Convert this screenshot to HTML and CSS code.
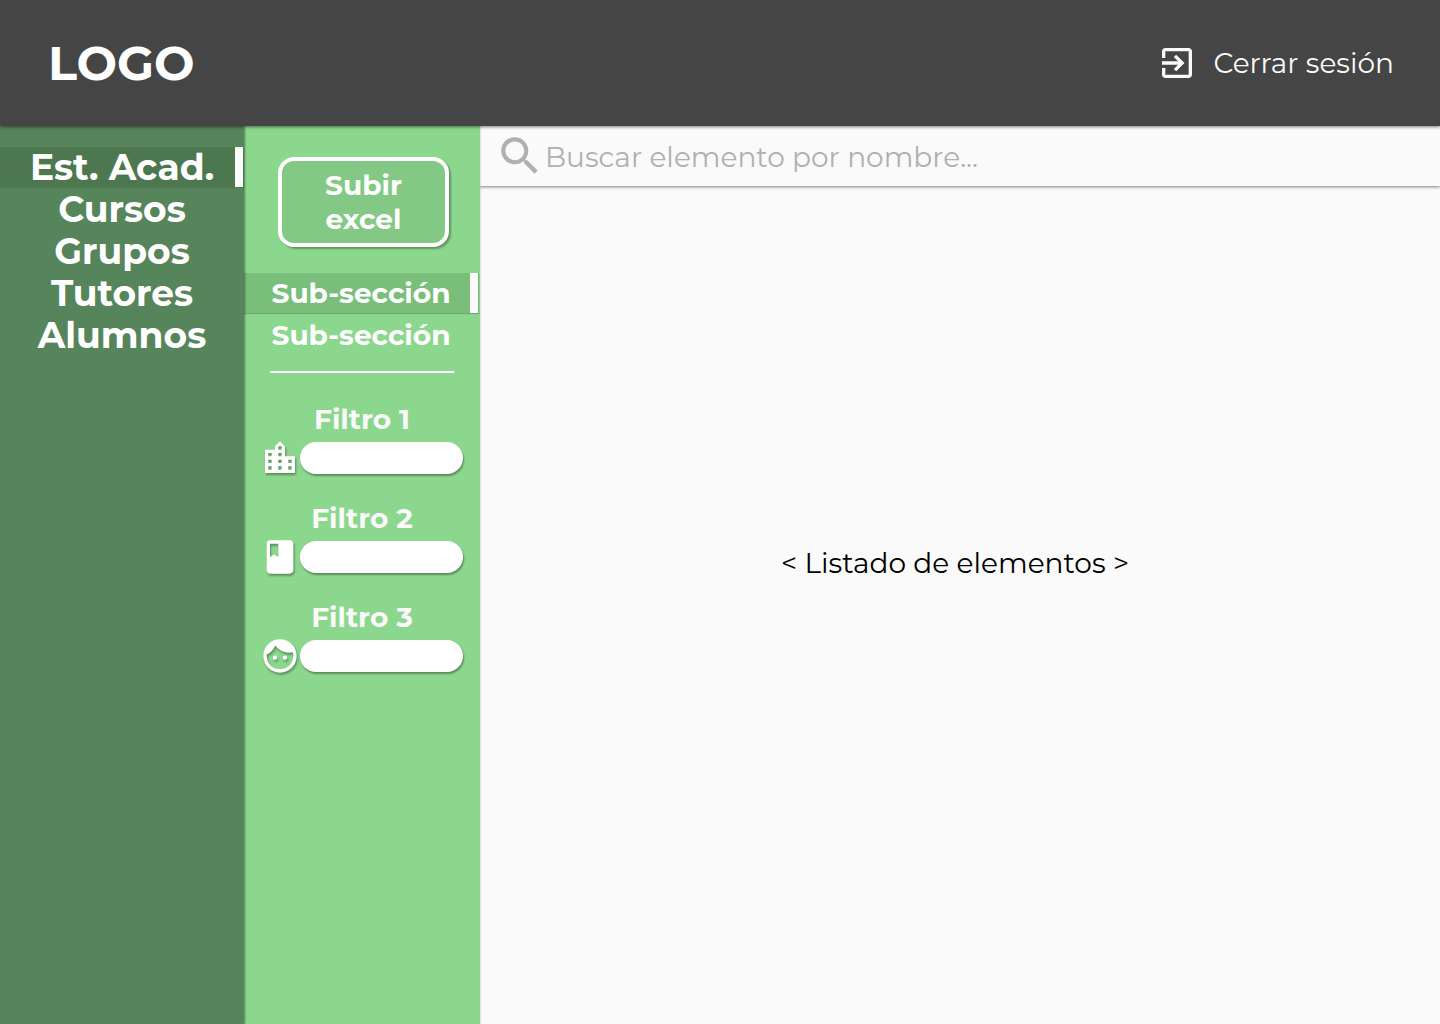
FILE: index.html
```html
<!DOCTYPE html>
<html lang="es">
<head>
  <meta charset="utf-8">
  <meta name="viewport" content="width=device-width, initial-scale=1">
  <title>Estructura académica</title>
  <link rel="stylesheet" href="styles.css">
</head>
<body>
  <header class="topbar">
    <a class="logo" href="#">LOGO</a>
    <button class="logout" type="button">
      <svg class="icon" viewBox="0 0 24 24" aria-hidden="true"><path d="M10.09 15.59L11.5 17l5-5-5-5-1.41 1.41L12.67 11H3v2h9.67l-2.58 2.59zM19 3H5c-1.11 0-2 .9-2 2v4h2V5h14v14H5v-4H3v4c0 1.1.89 2 2 2h14c1.1 0 2-.9 2-2V5c0-1.1-.9-2-2-2z"/></svg>
      <span>Cerrar sesión</span>
    </button>
  </header>

  <div class="layout">
    <nav class="sections" aria-label="Secciones">
      <a class="section active" href="#">Est. Acad.</a>
      <a class="section" href="#">Cursos</a>
      <a class="section" href="#">Grupos</a>
      <a class="section" href="#">Tutores</a>
      <a class="section" href="#">Alumnos</a>
    </nav>

    <aside class="panel">
      <button class="upload" type="button">Subir<br>excel</button>
      <nav class="subsections" aria-label="Sub-secciones">
        <a class="subsection active" href="#">Sub-sección</a>
        <a class="subsection" href="#">Sub-sección</a>
      </nav>
      <hr class="divider">
      <form class="filters">
        <div class="filter">
          <label for="filter-1">Filtro 1</label>
          <div class="field">
            <svg class="icon raised" viewBox="0 0 24 24" aria-hidden="true"><path d="M15 11V5l-3-3-3 3v2H3v14h18V11h-6zm-8 8H5v-2h2v2zm0-4H5v-2h2v2zm0-4H5V9h2v2zm6 8h-2v-2h2v2zm0-4h-2v-2h2v2zm0-4h-2V9h2v2zm0-4h-2V5h2v2zm6 12h-2v-2h2v2zm0-4h-2v-2h2v2z"/></svg>
            <input id="filter-1" type="text">
          </div>
        </div>
        <div class="filter">
          <label for="filter-2">Filtro 2</label>
          <div class="field">
            <svg class="icon raised" viewBox="0 0 24 24" aria-hidden="true"><path d="M18 2H6c-1.1 0-2 .9-2 2v16c0 1.1.9 2 2 2h12c1.1 0 2-.9 2-2V4c0-1.1-.9-2-2-2zM6 4h5v8l-2.5-1.5L6 12V4z"/></svg>
            <input id="filter-2" type="text">
          </div>
        </div>
        <div class="filter">
          <label for="filter-3">Filtro 3</label>
          <div class="field">
            <svg class="icon raised" viewBox="0 0 24 24" aria-hidden="true"><path d="M9 11.75c-.69 0-1.25.56-1.25 1.25s.56 1.25 1.25 1.25 1.25-.56 1.25-1.25-.56-1.25-1.25-1.25zm6 0c-.69 0-1.25.56-1.25 1.25s.56 1.25 1.25 1.25 1.25-.56 1.25-1.25-.56-1.25-1.25-1.25zM12 2C6.48 2 2 6.48 2 12s4.48 10 10 10 10-4.48 10-10S17.52 2 12 2zm0 18c-4.41 0-8-3.59-8-8 0-.29.02-.58.05-.86 2.36-1.05 4.23-2.98 5.21-5.37C11.07 8.33 14.05 10 17.42 10c.78 0 1.53-.09 2.25-.26.21.71.33 1.47.33 2.26 0 4.41-3.59 8-8 8z"/></svg>
            <input id="filter-3" type="text">
          </div>
        </div>
      </form>
    </aside>

    <main class="content">
      <label class="search">
        <svg class="search-icon" viewBox="0 0 24 24" aria-hidden="true"><path d="M15.5 14h-.79l-.28-.27C15.41 12.59 16 11.11 16 9.5 16 5.91 13.09 3 9.5 3S3 5.91 3 9.5 5.91 16 9.5 16c1.61 0 3.09-.59 4.23-1.57l.27.28v.79l5 4.99L20.49 19l-4.99-5zm-6 0C7.01 14 5 11.99 5 9.5S7.01 5 9.5 5 14 7.01 14 9.5 11.99 14 9.5 14z"/></svg>
        <input type="search" aria-label="Buscar elemento por nombre" placeholder="Buscar elemento por nombre...">
      </label>
      <section class="list">&lt; Listado de elementos &gt;</section>
    </main>
  </div>
</body>
</html>
```
FILE: styles.css
```css
* {
  box-sizing: border-box;
}

body {
  display: flex;
  flex-direction: column;
  min-height: 100vh;
  margin: 0;
  background: #fafafa;
  font-family: Montserrat, Inter, sans-serif;
  font-size: 28px;
}

a {
  color: inherit;
  text-decoration: none;
}

button,
input {
  font: inherit;
}

.icon {
  flex: none;
  width: 40px;
  height: 40px;
  fill: currentColor;
}

.topbar {
  z-index: 3;
  display: flex;
  align-items: center;
  justify-content: space-between;
  height: 126px;
  padding: 0 46px 0 48px;
  background: #454545;
  box-shadow: 0 1px 3px rgba(0, 0, 0, 0.5);
  color: #fff;
}

.logo {
  font-size: 48px;
  font-weight: 700;
}

.logout {
  display: flex;
  align-items: center;
  gap: 16px;
  padding: 0;
  border: 0;
  background: none;
  color: #fafafa;
}

.layout {
  display: grid;
  flex: 1;
  grid-template-columns: 244px 236px 1fr;
}

.sections {
  z-index: 2;
  display: flex;
  flex-direction: column;
  gap: 2px;
  padding-top: 21px;
  background: #57855b;
  box-shadow: 1px 0 2px rgba(0, 0, 0, 0.4);
  color: #fff;
  font-size: 36px;
  font-weight: 700;
}

.section,
.subsection {
  position: relative;
  height: 40px;
  line-height: 40px;
  text-align: center;
}

.active::after {
  content: "";
  position: absolute;
  top: 0;
  right: 1px;
  width: 8px;
  height: 40px;
  background: #fafafa;
}

.section.active {
  background: #4d774f;
  box-shadow: 0 1px 1px rgba(0, 0, 0, 0.1);
}

.panel {
  z-index: 1;
  padding-top: 31px;
  background: #8cd78e;
  box-shadow: 0 0 2px rgba(0, 0, 0, 0.3);
  color: #fff;
  font-weight: 700;
}

.upload {
  display: block;
  width: 171px;
  height: 90px;
  margin: 0 0 26px 34px;
  padding: 0;
  border: 4px solid #fff;
  border-radius: 16px;
  background: #83c985;
  box-shadow: 2px 2px 2px rgba(0, 0, 0, 0.3);
  color: #fff;
  line-height: 34px;
}

.subsections {
  display: flex;
  flex-direction: column;
  gap: 2px;
  padding-right: 1px;
}

.subsection {
  padding-right: 1px;
}

.subsection.active {
  background: #79be7b;
  box-shadow: 0 1px 1px rgba(0, 0, 0, 0.2);
}

.divider {
  height: 2px;
  margin: 16px 26px 29px;
  border: 0;
  background: #fff;
}

.filters {
  display: flex;
  flex-direction: column;
  gap: 23px;
}

.filter {
  display: flex;
  flex-direction: column;
  gap: 2px;
}

.filter label {
  height: 34px;
  color: #fafafa;
  line-height: 34px;
  text-align: center;
}

.field {
  display: flex;
  align-items: center;
  padding: 0 17px 0 16px;
}

.field input {
  width: 100%;
  min-width: 0;
  height: 32px;
  padding: 0 14px;
  border: 0;
  border-radius: 16px;
  background: #fff;
  box-shadow: 1px 2px 2px rgba(0, 0, 0, 0.35);
  font-size: 18px;
}

.raised {
  filter: drop-shadow(1px 2px 1px rgba(0, 0, 0, 0.35));
}

.content {
  display: flex;
  flex-direction: column;
}

.search {
  display: flex;
  align-items: center;
  height: 60px;
  padding-left: 15px;
  box-shadow: 0 1px 3px rgba(0, 0, 0, 0.5);
}

.search-icon {
  flex: none;
  width: 50px;
  height: 50px;
  fill: #b0b0b0;
}

.search input {
  flex: 1;
  min-width: 0;
  height: 60px;
  padding: 2px 0 0;
  border: 0;
  background: none;
  color: #454545;
}

.search input::placeholder {
  color: #b0b0b0;
}

.list {
  display: flex;
  flex: 1;
  align-items: flex-start;
  justify-content: center;
  padding-top: 360px;
  padding-right: 10px;
  color: #000;
}
```
